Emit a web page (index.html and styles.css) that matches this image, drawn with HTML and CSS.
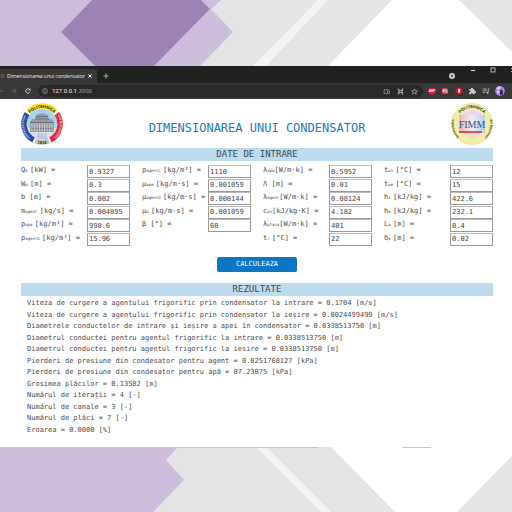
FILE: index.html
```html
<!DOCTYPE html>
<html lang="ro">
<head>
<meta charset="utf-8">
<title>Dimensionarea unui condensator</title>
<link rel="stylesheet" href="styles.css">
</head>
<body>
<svg class="backdrop" viewBox="0 0 512 512" preserveAspectRatio="none" aria-hidden="true">
  <rect width="512" height="512" fill="#e5e5e5"/>
  <path fill="#cdbfdc" d="M0 0H221L211 9L233 32L200 66H0ZM0 447H178L166 460L184 480L153 512H0Z"/>
  <path fill="#9c83b5" d="M92 0H201L210 9L154 66H95L61 32Z"/>
  <path fill="#f4f4f4" d="M318 0H328L266 66H253ZM256 447H266L331 512H321Z"/>
  <path fill="#fff" d="M392 0H459L512 52V66H328ZM331 447L395 512H457L512 456V447Z"/>
  <path fill="#c9c6cc" d="M0 447H318V448H0ZM402 447H431V448H402Z"/>
</svg>
<div class="window">
  <div class="tabs">
    <div class="tab">
      <svg class="icon" viewBox="0 0 8 8"><circle cx="4" cy="4" r="2.7" fill="none" stroke="#777"/><path d="M2 3L4 4L3 6M4 2L6 4" stroke="#777" fill="none" stroke-width=".7"/></svg>
      <span class="tab-title">Dimensionarea unui condensator</span>
      <button class="tool" aria-label="Închide fila"><svg viewBox="0 0 6 6"><path d="M1.4 1.4L4.6 4.6M4.6 1.4L1.4 4.6" stroke="#eee"/></svg></button>
    </div>
    <button class="tool new-tab" aria-label="Filă nouă"><svg viewBox="0 0 6 6"><path d="M3 .5V5.5M.5 3H5.5" stroke="#ccc" stroke-width=".8"/></svg></button>
    <div class="controls">
      <svg class="badge" viewBox="0 0 8 8"><circle cx="4" cy="4" r="3" fill="#ccc"/><path d="M2.6 3.2H5.4L4 5.2Z" fill="#222"/></svg>
      <button class="tool" aria-label="Minimizează"><svg viewBox="0 0 6 6"><path d="M1 3.5H5" stroke="#ddd"/></svg></button>
      <button class="tool" aria-label="Maximizează"><svg viewBox="0 0 6 6"><rect x="1" y="1" width="4" height="4" fill="none" stroke="#ddd" stroke-width=".8"/></svg></button>
      <button class="tool" aria-label="Închide"><svg viewBox="0 0 6 6"><path d="M1 1L5 5M5 1L1 5" stroke="#ddd" stroke-width=".8"/></svg></button>
    </div>
  </div>
  <div class="toolbar">
    <div class="nav">
      <button class="tool" aria-label="Înapoi"><svg viewBox="0 0 6 6"><path d="M6 3H.7M3 .7L.7 3L3 5.3" fill="none" stroke="#777" stroke-width=".8"/></svg></button>
      <button class="tool" aria-label="Înainte"><svg viewBox="0 0 6 6"><path d="M0 3H5.3M3 .7L5.3 3L3 5.3" fill="none" stroke="#777" stroke-width=".8"/></svg></button>
      <button class="tool" aria-label="Reîncarcă"><svg viewBox="0 0 6 6"><path d="M4.9 4A2.2 2.2 0 1 1 4.7 1.6" fill="none" stroke="#ddd" stroke-width=".9"/><path d="M5.5 .3V2.6H3.2Z" fill="#ddd"/></svg></button>
    </div>
    <div class="address">
      <svg class="info" viewBox="0 0 6 6"><circle cx="3" cy="3" r="2.5" fill="none" stroke="#aaa" stroke-width=".6"/><path d="M3 2.6V4.5M3 1.4V2.1" stroke="#bbb" stroke-width=".7"/></svg>
      <span class="url">127.0.0.1<span class="port">:3000</span></span>
      <div class="page-tools">
        <svg viewBox="0 0 7 7"><path d="M1.2 4.5V1.6H5.5M.3 5.4H3.8M4.5 2.8H6.5V5.6H4.5Z" fill="none" stroke="#aaa" stroke-width=".7"/></svg>
        <svg viewBox="0 0 7 7"><path d="M.5 1H2V6H.5M6.5 1H5V6H6.5M1 2.6H6M1 4.5H6" fill="none" stroke="#bbb" stroke-width=".8"/></svg>
        <svg viewBox="0 0 7 7"><path d="M3.5 .8L4.3 2.7L6.4 2.9L4.8 4.2L5.3 6.2L3.5 5.1L1.7 6.2L2.2 4.2L.6 2.9L2.7 2.7Z" fill="none" stroke="#ccc" stroke-width=".6"/></svg>
      </div>
    </div>
    <div class="extensions">
      <svg viewBox="0 0 8 8"><path d="M2.5 .5H5.5L7.6 2.6V5.4L5.5 7.5H2.5L.4 5.4V2.6Z" fill="#e0103c"/><text class="abp" x="4" y="5">ABP</text></svg>
      <svg viewBox="0 0 8 8"><path d="M1 1.5L5 1L7 2.2V6.5L3 7L1 5.8Z" fill="#e85a68"/><path d="M2.3 5V3L3.5 4L4.5 2.7L5.8 5.5" fill="none" stroke="#fff" stroke-width=".7"/></svg>
      <svg viewBox="0 0 8 8"><path d="M2.5 .5H5.5L7.5 2.5V5.5L5.5 7.5H2.5L.5 5.5V2.5Z" fill="#d9101a"/><path d="M3 2.2V4.8L4 6.2L5.3 4.5V2.2L4 1.7Z" fill="#fff"/></svg>
      <svg viewBox="0 0 8 8"><path d="M1 2.2H3A1.1 1.1 0 1 1 5 2.2H6.4V4A1.1 1.1 0 1 1 6.4 6V7.2H4.8A1 1 0 1 0 2.8 7.2H1V5.3A1 1 0 1 0 1 3.6Z" fill="#ccc"/></svg>
      <svg viewBox="0 0 8 8"><path d="M.7 2H5M.7 3.8H5M.7 5.5H3M7.7 1.8H6.3V5.8" fill="none" stroke="#bbb" stroke-width=".8"/><circle cx="5.5" cy="5.8" r="1" fill="#bbb"/></svg>
      <svg class="avatar" viewBox="0 0 10 10"><circle cx="5" cy="5" r="4.8" fill="#a68be0"/><path d="M1 2.5A4.8 4.8 0 0 1 6 .4L4 4Z" fill="#d8ccf4"/><path d="M5 9V5L6.5 3L8 5.2V8.5Z" fill="#36245e"/><circle cx="3.2" cy="6" r="1" fill="#eee"/></svg>
    </div>
  </div>
  <main>
    <header>
      <svg class="logo" viewBox="0 0 42 42" role="img" aria-label="Universitatea Politehnica din București">
        <defs>
          <path id="ring-top" d="M4.9 21A16.1 16.1 0 0 1 37.1 21"/>
          <path id="ring-left" d="M14 37.7A18 18 0 0 1 8.3 8.3"/>
          <path id="ring-right" d="M32.5 7.2A18 18 0 0 1 28 37.7"/>
        </defs>
        <circle cx="21" cy="21" r="20.7" fill="#fff"/>
        <circle cx="21" cy="21" r="15.2" fill="#a5d4ee"/>
        <path d="M6.5 25H35.5A15.2 15.2 0 0 1 6.5 25Z" fill="#dde1eb"/>
        <g fill="none" stroke-width="5.4">
          <path d="M7.5 8.9A18.1 18.1 0 0 1 34.5 8.9" stroke="#f5df1d"/>
          <path d="M35.8 10.6A18.1 18.1 0 0 1 29.4 37" stroke="#e52c3b"/>
          <path d="M12.6 37A18.1 18.1 0 0 1 6.2 10.6" stroke="#264f9e"/>
          <path d="M28 37.7A18.1 18.1 0 0 1 14 37.7" stroke="#c7c8cb"/>
        </g>
        <path d="M11 16H14L15 12Q21 8.5 27 12L28 16H31L33 19V29H9V19Z" fill="#989da4"/>
        <path d="M9 19.5H33M10 25.5H32M15 13.5H27M14 16H28" stroke="#60666d" stroke-width=".8"/>
        <path d="M11 20V28M13.5 20V28M16 20V28M18.5 20V28M21 20V28M23.5 20V28M26 20V28M28.5 20V28M31 20V28" stroke="#cdd0d4" stroke-width=".8"/>
        <path d="M17 31H25V35H17ZM21 31V35M17 33H25" fill="none" stroke="#9baed4" stroke-width=".7"/>
        <text class="ring-text"><textPath href="#ring-top" startOffset="50%">POLITEHNICA</textPath></text>
        <text class="ring-text ring-light"><textPath href="#ring-left" startOffset="50%">UNIVERSITATEA</textPath></text>
        <text class="ring-text ring-light"><textPath href="#ring-right" startOffset="50%">DIN BUCURESTI</textPath></text>
        <text class="ring-text" x="21" y="40.6">1818</text>
      </svg>
      <h1>DIMENSIONAREA UNUI CONDENSATOR</h1>
      <svg class="logo" viewBox="0 0 42 42" role="img" aria-label="FIMM">
        <defs>
          <path id="seal-top" d="M5 21A16 16 0 0 1 37 21"/>
          <path id="seal-left" d="M14.3 38.2A18.4 18.4 0 0 1 6.3 10"/>
          <path id="seal-right" d="M35.7 10A18.4 18.4 0 0 1 27.7 38.2"/>
          <linearGradient id="sheen"><stop stop-color="#efb5a7"/><stop offset=".5" stop-color="#f7edf0"/><stop offset="1" stop-color="#b9cdea"/></linearGradient>
        </defs>
        <circle cx="21" cy="21" r="20.6" fill="#f4ee9e" stroke="#ddd7a4" stroke-width=".6"/>
        <circle cx="21" cy="21" r="15" fill="#f1e4df"/>
        <path d="M8 12H34V30H8Z" fill="url(#sheen)"/>
        <path d="M10 12L21 6.5L31 12Z" fill="#e8d6ee"/>
        <path d="M8 29H31" stroke="#c62e40" stroke-width="1.6"/>
        <path d="M13 31L21 36L29 31Z" fill="#f6d9b8"/>
        <text class="seal-name" x="21" y="25">FIMM</text>
        <text class="ring-text"><textPath href="#seal-top" startOffset="50%">POLITEHNICA</textPath></text>
        <text class="ring-text seal-small"><textPath href="#seal-left" startOffset="50%">Universitatea</textPath></text>
        <text class="ring-text seal-small"><textPath href="#seal-right" startOffset="50%">din București</textPath></text>
      </svg>
    </header>
    <form>
      <h2>DATE DE INTRARE</h2>
      <div class="fields">
        <div class="column">
          <div class="field"><label for="qk">Q<sub>k </sub>[kW] =</label><input id="qk" value="0.9327"></div>
          <div class="field"><label for="wp">W<sub>p </sub>[m] =</label><input id="wp" value="0.3"></div>
          <div class="field"><label for="b">b [m] =</label><input id="b" value="0.002"></div>
          <div class="field"><label for="ma">m<sub>agent </sub>[kg/s] =</label><input id="ma" value="0.004895"></div>
          <div class="field"><label for="ra">ρ<sub>apa </sub>[kg/m³] =</label><input id="ra" value="998.6"></div>
          <div class="field"><label for="rg">ρ<sub>agentG </sub>[kg/m³] =</label><input id="rg" value="15.96"></div>
        </div>
        <div class="column">
          <div class="field"><label for="rl">ρ<sub>agentL </sub>[kg/m³] =</label><input id="rl" value="1110"></div>
          <div class="field"><label for="ua">μ<sub>apa </sub>[kg/m·s] =</label><input id="ua" value="0.001059"></div>
          <div class="field"><label for="ug">μ<sub>agentG </sub>[kg/m·s] =</label><input id="ug" value="0.000144"></div>
          <div class="field"><label for="up">μ<sub>p </sub>[kg/m·s] =</label><input id="up" value="0.001059"></div>
          <div class="field"><label for="be">β [°] =</label><input id="be" value="60"></div>
        </div>
        <div class="column">
          <div class="field"><label for="la">λ<sub>apa</sub>[W/m·k] =</label><input id="la" value="0.5952"></div>
          <div class="field"><label for="lm">Λ [m] =</label><input id="lm" value="0.01"></div>
          <div class="field"><label for="lg">λ<sub>agent</sub>[W/m·k] =</label><input id="lg" value="0.08124"></div>
          <div class="field"><label for="cp">c<sub>pv</sub>[kJ/kg·K] =</label><input id="cp" value="4.182"></div>
          <div class="field"><label for="lp">λ<sub>placa</sub>[W/m·k] =</label><input id="lp" value="401"></div>
          <div class="field"><label for="tr">t<sub>r </sub>[°C] =</label><input id="tr" value="22"></div>
        </div>
        <div class="column">
          <div class="field"><label for="wi">t<sub>wi </sub>[°C] =</label><input id="wi" value="12"></div>
          <div class="field"><label for="we">t<sub>we </sub>[°C] =</label><input id="we" value="15"></div>
          <div class="field"><label for="hi">h<sub>i </sub>[kJ/kg] =</label><input id="hi" value="422.6"></div>
          <div class="field"><label for="he">h<sub>e </sub>[kJ/kg] =</label><input id="he" value="232.1"></div>
          <div class="field"><label for="lgp">L<sub>p </sub>[m] =</label><input id="lgp" value="0.4"></div>
          <div class="field"><label for="dp">δ<sub>p </sub>[m] =</label><input id="dp" value="0.02"></div>
        </div>
      </div>
      <button class="submit" type="button">CALCULEAZA</button>
    </form>
    <section>
      <h2>REZULTATE</h2>
      <ul class="results">
        <li>Viteza de curgere a agentului frigorific prin condensator la intrare = 0.1704 [m/s]</li>
        <li>Viteza de curgere a agentului frigorific prin condensator la ieșire = 0.0024499499 [m/s]</li>
        <li>Diametrele conductelor de intrare și ieșire a apei în condensator = 0.0338513750 [m]</li>
        <li>Diametrul conductei pentru agentul frigorific la intrare = 0.0338513750 [m]</li>
        <li>Diametrul conductei pentru agentul frigorific la iesire = 0.0338513750 [m]</li>
        <li>Pierderi de presiune din condesator pentru agent = 0.0251768127 [kPa]</li>
        <li>Pierderi de presiune din condesator pentru apă = 87.23075 [kPa]</li>
        <li>Grosimea plăcilor = 0.13582 [m]</li>
        <li>Numărul de iterații = 4 [-]</li>
        <li>Numărul de canale = 3 [-]</li>
        <li>Numărul de plăci = 7 [-]</li>
        <li>Eroarea = 0.0000 [%]</li>
      </ul>
    </section>
  </main>
</div>
</body>
</html>
```

FILE: styles.css
```css
* { box-sizing: border-box; }

body {
  margin: 0;
  min-height: 100vh;
  padding: 66px 0 64px;
  position: relative;
  overflow-x: hidden;
  background: #e5e5e5;
  color: #4a4a4a;
  font: 7px/11px "DejaVu Sans Mono", monospace;
}

.backdrop {
  position: absolute;
  inset: 0;
  width: 100%;
  height: 100%;
  z-index: -1;
}

svg { display: block; }
button { font: inherit; border: 0; padding: 0; }

/* Browser frame */
.window { background: #fff; overflow: hidden; }

.tabs {
  display: flex;
  align-items: flex-end;
  height: 17px;
  background: #212121;
}

.tab {
  display: flex;
  align-items: center;
  gap: 2px;
  width: 97px;
  height: 14px;
  border-radius: 0 3px 0 0;
  background: #383838;
  color: #eee;
  font: 5px/8px "Open Sans", sans-serif;
}

.tab-title { flex: 1; white-space: nowrap; }
.tab .icon { width: 8px; height: 8px; }
.tab .tool { margin-right: 4px; }

.tool { width: 6px; height: 6px; background: none; flex: none; }
.new-tab { margin: 0 0 4px 6px; }

.controls {
  display: flex;
  align-self: flex-start;
  gap: 14px;
  margin: 1px -4px 0 auto;
}

.badge { width: 8px; height: 8px; margin-top: 5px; }

.toolbar {
  display: flex;
  align-items: center;
  height: 16px;
  padding-right: 7px;
  background: #383838;
}

.nav { display: flex; gap: 8px; margin: 0 7px 0 -3px; }

.address {
  flex: 1;
  display: flex;
  align-items: center;
  gap: 4px;
  height: 12px;
  margin-right: 5px;
  padding: 0 5px 0 4px;
  border-radius: 6px;
  background: #282827;
  color: #eee;
  font: 6px/8px Roboto, sans-serif;
}

.info { width: 6px; height: 6px; }
.port { color: #999; }
.page-tools { display: flex; gap: 7px; margin-left: auto; }
.page-tools svg { width: 7px; height: 7px; }

.extensions {
  display: flex;
  align-items: center;
  justify-content: space-between;
  width: 77px;
}

.extensions svg { width: 8px; height: 8px; }
.extensions .avatar { width: 10px; height: 10px; }
.abp { font: bold 3px "Liberation Sans", sans-serif; fill: #fff; text-anchor: middle; }

/* Page */
main { padding: 4px 19px 11px 21px; }

header {
  display: flex;
  justify-content: space-between;
  align-items: center;
  margin-bottom: 3px;
}

.logo { width: 42px; height: 42px; }
.ring-text { font: bold 4px "Liberation Sans", sans-serif; fill: #222; text-anchor: middle; }
.ring-light { font-size: 3px; fill: #dde; }
.seal-small { font-size: 3px; }
.seal-name { font: 10px "Liberation Serif", serif; fill: #155a96; text-anchor: middle; }

h1 {
  margin: 8px 0 0;
  color: #2377ba;
  font-size: 12px;
  font-weight: normal;
  line-height: 16px;
}

h2 {
  margin: 0;
  background: #bddcee;
  color: #3c4a54;
  font-size: 9px;
  font-weight: normal;
  line-height: 13px;
  text-align: center;
}

.fields {
  display: grid;
  grid-template-columns: repeat(4, 1fr);
  gap: 12px;
  padding-top: 4px;
}

.column {
  display: grid;
  grid-template-rows: repeat(6, 13px);
  align-content: space-between;
  min-height: 81px;
}

.field { display: flex; justify-content: space-between; }

label { line-height: 11px; white-space: nowrap; }
sub { font-size: 4px; line-height: 1; vertical-align: baseline; }

input {
  width: 43px;
  height: 13px;
  padding: 0 1px;
  border: 1px solid #999;
  border-top-color: #bbb;
  border-radius: 0;
  background: #fff;
  color: #444;
  font: inherit;
}

.submit {
  display: block;
  width: 80px;
  height: 15px;
  margin: 11px auto;
  border-radius: 2px;
  background: #0b76c1;
  color: #fff;
}

.results {
  display: grid;
  grid-template-rows: repeat(12, 1fr);
  min-height: 138px;
  margin: 2px 0 0;
  padding: 0 0 0 6px;
  list-style: none;
}
```
